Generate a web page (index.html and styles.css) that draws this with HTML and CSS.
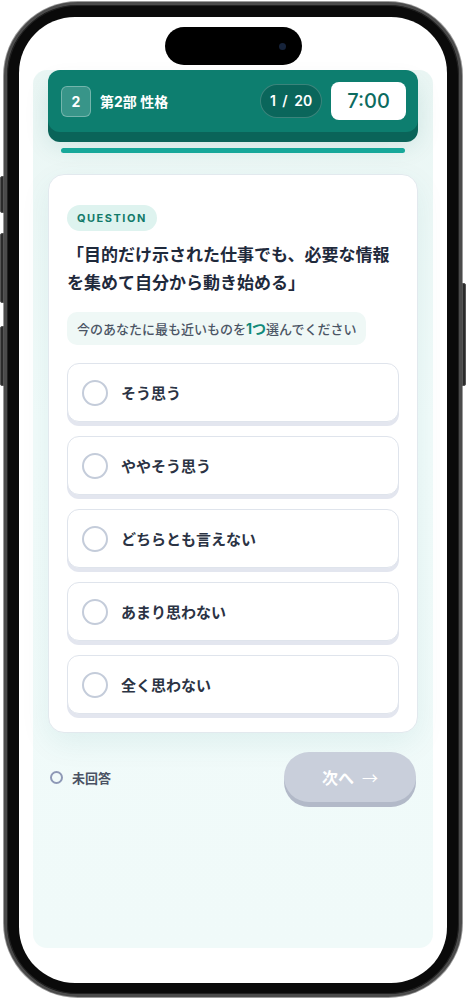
FILE: index.html
```html
<!DOCTYPE html>
<html lang="ja">
<head>
    <meta charset="UTF-8">
    <title>性格検査</title>
    <link rel="stylesheet" href="styles.css">
</head>
<body>

    <div class="device">
        <span class="side-btn btn-action"></span>
        <span class="side-btn btn-vol-up"></span>
        <span class="side-btn btn-vol-down"></span>
        <span class="side-btn btn-power"></span>

        <div class="screen">
            <div class="island"><span class="cam"></span></div>

            <div class="app">
                <!-- ヘッダー -->
                <div class="topbar">
                    <span class="part-no">2</span>
                    <span class="part-name">第2部 性格</span>
                    <span class="count">1 / 20</span>
                    <span class="timer">7:00</span>
                </div>
                <div class="progress"></div>

                <!-- 質問カード -->
                <div class="card">
                    <span class="tag">QUESTION</span>
                    <h2 class="question">「目的だけ示された仕事でも、必要な情報を集めて自分から動き始める」</h2>
                    <p class="hint">今のあなたに最も近いものを<b>1つ</b>選んでください</p>

                    <ul class="options">
                        <li><span class="radio"></span>そう思う</li>
                        <li><span class="radio"></span>ややそう思う</li>
                        <li><span class="radio"></span>どちらとも言えない</li>
                        <li><span class="radio"></span>あまり思わない</li>
                        <li><span class="radio"></span>全く思わない</li>
                    </ul>
                </div>

                <!-- フッター -->
                <div class="footer">
                    <span class="status"><i></i>未回答</span>
                    <button class="next" disabled>次へ<span class="arrow">→</span></button>
                </div>
            </div>
        </div>
    </div>

</body>
</html>
```

FILE: styles.css
```css
* {
    padding: 0;
    margin: 0;
    box-sizing: border-box;
    list-style: none;
}
body {
    background: #fff;
    font-family: Inter, "Noto Sans CJK JP", sans-serif;
    width: 466px;
    height: 1000px;
    overflow: hidden;
}

/* 端末フレーム */
.device {
    position: relative;
    width: 458px;
    height: 995px;
    margin: 2px 4px 0;
    padding: 12px;
    background: #0a0a0a;
    border: 3px solid #4b4b4b;
    border-radius: 74px;
    box-shadow: inset 0 0 0 1px #222, 0 0 0 1px #9b9b9b;
}
.side-btn {
    position: absolute;
    width: 4px;
    background: #2b2b2b;
    border: 1px solid #555;
}
.btn-action {
    left: -7px;
    top: 171px;
    height: 37px;
    border-radius: 2px 0 0 2px;
}
.btn-vol-up {
    left: -7px;
    top: 228px;
    height: 70px;
    border-radius: 2px 0 0 2px;
}
.btn-vol-down {
    left: -7px;
    top: 321px;
    height: 60px;
    border-radius: 2px 0 0 2px;
}
.btn-power {
    right: -7px;
    top: 278px;
    height: 103px;
    border-radius: 0 2px 2px 0;
}
.screen {
    width: 428px;
    height: 966px;
    background: #fff;
    border-radius: 56px;
    padding-top: 10px;
    overflow: hidden;
}
.island {
    display: flex;
    align-items: center;
    justify-content: flex-end;
    width: 137px;
    height: 38px;
    margin: 0 auto;
    padding-right: 16px;
    background: #000;
    border-radius: 19px;
}
.cam {
    width: 7px;
    height: 7px;
    border-radius: 50%;
    background: #16233a;
}

/* アプリ本体 */
.app {
    height: 878px;
    margin: 5px 14px 0;
    padding: 0 15px;
    background: linear-gradient(#eaf6f4, #f1fbfa 40%, #f0faf9);
    border-radius: 14px;
}
.topbar {
    display: flex;
    align-items: center;
    height: 62px;
    padding: 0 12px 0 13px;
    background: #0d7e6f;
    border-radius: 12px;
    box-shadow: 0 10px 0 #0a6459, 0 14px 24px rgba(10, 100, 89, .12);
    color: #fff;
}
.part-no {
    width: 30px;
    height: 31px;
    line-height: 29px;
    text-align: center;
    font-size: 14px;
    font-weight: 700;
    background: rgba(255, 255, 255, .18);
    border: 1px solid rgba(255, 255, 255, .3);
    border-radius: 6px;
}
.part-name {
    margin-left: 9px;
    font-size: 14px;
    font-weight: 700;
    flex: 1;
}
.count {
    width: 62px;
    height: 34px;
    line-height: 32px;
    text-align: center;
    font-size: 14px;
    font-weight: 600;
    word-spacing: 3px;
    background: #0a665b;
    border: 1px solid rgba(255, 255, 255, .2);
    border-radius: 17px;
}
.timer {
    width: 75px;
    height: 38px;
    line-height: 38px;
    margin-left: 9px;
    text-align: center;
    font-size: 20px;
    font-weight: 500;
    color: #0c6b5f;
    background: #fff;
    border-radius: 8px;
}
.progress {
    height: 5px;
    margin: 16px 13px 0;
    background: #17a89a;
    border-radius: 3px;
}

/* 質問カード */
.card {
    margin-top: 21px;
    padding: 30px 18px 18px;
    background: #fff;
    border: 1px solid #e2e9ee;
    border-radius: 16px;
    box-shadow: 0 10px 30px rgba(15, 118, 110, .08);
}
.tag {
    display: inline-block;
    height: 26px;
    line-height: 26px;
    padding: 0 10px;
    font-size: 11px;
    font-weight: 700;
    letter-spacing: 1.5px;
    color: #127a6a;
    background: #def3ef;
    border-radius: 13px;
}
.question {
    margin: 10px 0 15px;
    font-size: 17px;
    line-height: 28px;
    font-weight: 700;
    color: #1f2a3c;
}
.hint {
    display: inline-block;
    height: 33px;
    line-height: 33px;
    padding: 0 10px;
    font-size: 13px;
    font-weight: 500;
    color: #4b5565;
    background: #eff8f6;
    border-radius: 10px;
}
.hint b {
    color: #118a7a;
    font-size: 14px;
}
.options {
    display: flex;
    flex-direction: column;
    gap: 14px;
    margin-top: 18px;
}
.options li {
    display: flex;
    align-items: center;
    gap: 13px;
    height: 59px;
    padding-left: 14px;
    font-size: 15px;
    font-weight: 700;
    color: #2b3344;
    background: #fff;
    border: 1px solid #dfe4ec;
    border-radius: 12px;
    box-shadow: 0 4px 0 #e3e6ef;
}
.radio {
    width: 26px;
    height: 26px;
    border: 2.5px solid #c4ccda;
    border-radius: 50%;
}

/* フッター */
.footer {
    display: flex;
    align-items: center;
    justify-content: space-between;
    margin-top: 19px;
    padding: 0 2px;
}
.status {
    display: flex;
    align-items: center;
    gap: 9px;
    font-size: 13px;
    font-weight: 700;
    color: #4a5263;
}
.status i {
    width: 13px;
    height: 13px;
    border: 2.5px solid #8e99b6;
    border-radius: 50%;
}
.next {
    width: 132px;
    height: 50px;
    font-family: "Noto Sans CJK JP", sans-serif;
    font-size: 16px;
    font-weight: 700;
    color: #fff;
    background: #c9cfdb;
    border: none;
    border-radius: 25px;
    box-shadow: 0 5px 0 #b2b9c8;
}
.next .arrow {
    margin-left: 8px;
    font-weight: 400;
}
```
